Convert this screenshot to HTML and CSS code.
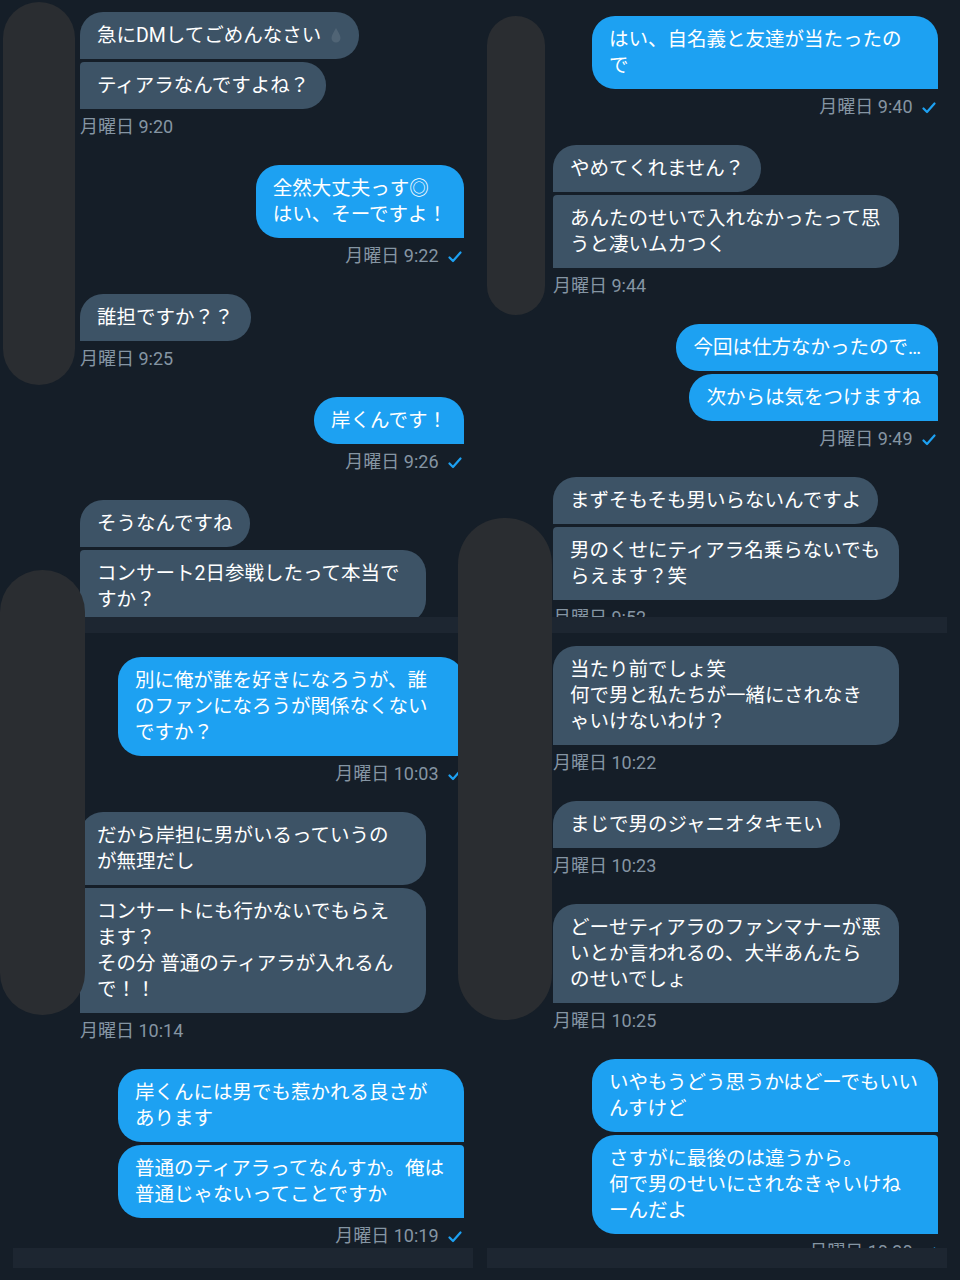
FILE: index.html
```html
<!DOCTYPE html>
<html lang="ja">
<head>
    <meta charset="UTF-8">
    <title>DM</title>
    <link rel="stylesheet" href="styles.css">
</head>
<body>

    <div class="collage">

        <!-- top left -->
        <section class="panel panel-top">
            <div class="chat chat-left" style="padding-top: 12px;">
                <div class="group in">
                    <div class="bubble">急にDMしてごめんなさい<svg class="drop" width="12" height="16" viewBox="0 0 12 16"><path d="M6 1 C4 5 1.5 8 1.5 11 A4.5 4.5 0 0 0 10.5 11 C10.5 8 8 5 6 1 Z" fill="rgba(255,255,255,0.1)"/></svg></div>
                    <div class="bubble cont">ティアラなんですよね？</div>
                    <div class="time">月曜日 9:20</div>
                </div>
                <div class="group out">
                    <div class="bubble">全然大丈夫っす◎<br>はい、そーですよ！</div>
                    <div class="time">月曜日 9:22 <svg class="check" width="14" height="12" viewBox="0 0 14 12"><path d="M1.5 6.5 L5 10 L12.5 1.5" fill="none" stroke="#1da1f2" stroke-width="2.2" stroke-linecap="round" stroke-linejoin="round"/></svg></div>
                </div>
                <div class="group in">
                    <div class="bubble">誰担ですか？？</div>
                    <div class="time">月曜日 9:25</div>
                </div>
                <div class="group out">
                    <div class="bubble">岸くんです！</div>
                    <div class="time">月曜日 9:26 <svg class="check" width="14" height="12" viewBox="0 0 14 12"><path d="M1.5 6.5 L5 10 L12.5 1.5" fill="none" stroke="#1da1f2" stroke-width="2.2" stroke-linecap="round" stroke-linejoin="round"/></svg></div>
                </div>
                <div class="group in">
                    <div class="bubble">そうなんですね</div>
                    <div class="bubble wide cont">コンサート2日参戦したって本当で<br>すか？</div>
                </div>
            </div>
            <div class="bar"></div>
        </section>

        <!-- top right -->
        <section class="panel panel-top">
            <div class="chat chat-right" style="padding-top: 16px;">
                <div class="group out">
                    <div class="bubble wide">はい、自名義と友達が当たったの<br>で</div>
                    <div class="time">月曜日 9:40 <svg class="check" width="14" height="12" viewBox="0 0 14 12"><path d="M1.5 6.5 L5 10 L12.5 1.5" fill="none" stroke="#1da1f2" stroke-width="2.2" stroke-linecap="round" stroke-linejoin="round"/></svg></div>
                </div>
                <div class="group in">
                    <div class="bubble">やめてくれません？</div>
                    <div class="bubble wide cont">あんたのせいで入れなかったって思<br>うと凄いムカつく</div>
                    <div class="time">月曜日 9:44</div>
                </div>
                <div class="group out">
                    <div class="bubble">今回は仕方なかったので…</div>
                    <div class="bubble cont">次からは気をつけますね</div>
                    <div class="time">月曜日 9:49 <svg class="check" width="14" height="12" viewBox="0 0 14 12"><path d="M1.5 6.5 L5 10 L12.5 1.5" fill="none" stroke="#1da1f2" stroke-width="2.2" stroke-linecap="round" stroke-linejoin="round"/></svg></div>
                </div>
                <div class="group in">
                    <div class="bubble">まずそもそも男いらないんですよ</div>
                    <div class="bubble wide cont">男のくせにティアラ名乗らないでも<br>らえます？笑</div>
                    <div class="time">月曜日 9:52</div>
                </div>
            </div>
            <div class="bar bar-right"></div>
        </section>

        <!-- bottom left -->
        <section class="panel panel-bottom">
            <div class="chat chat-left" style="padding-top: 24px;">
                <div class="group out">
                    <div class="bubble wide">別に俺が誰を好きになろうが、誰<br>のファンになろうが関係なくない<br>ですか？</div>
                    <div class="time">月曜日 10:03 <svg class="check" width="14" height="12" viewBox="0 0 14 12"><path d="M1.5 6.5 L5 10 L12.5 1.5" fill="none" stroke="#1da1f2" stroke-width="2.2" stroke-linecap="round" stroke-linejoin="round"/></svg></div>
                </div>
                <div class="group in">
                    <div class="bubble wide">だから岸担に男がいるっていうの<br>が無理だし</div>
                    <div class="bubble wide cont">コンサートにも行かないでもらえ<br>ます？<br>その分 普通のティアラが入れるん<br>で！！</div>
                    <div class="time">月曜日 10:14</div>
                </div>
                <div class="group out">
                    <div class="bubble wide">岸くんには男でも惹かれる良さが<br>あります</div>
                    <div class="bubble wide cont">普通のティアラってなんすか。俺は<br>普通じゃないってことですか</div>
                    <div class="time">月曜日 10:19 <svg class="check" width="14" height="12" viewBox="0 0 14 12"><path d="M1.5 6.5 L5 10 L12.5 1.5" fill="none" stroke="#1da1f2" stroke-width="2.2" stroke-linecap="round" stroke-linejoin="round"/></svg></div>
                </div>
            </div>
            <div class="bar bar-bl"></div>
        </section>

        <!-- bottom right -->
        <section class="panel panel-bottom">
            <div class="chat chat-right" style="padding-top: 13px;">
                <div class="group in">
                    <div class="bubble wide">当たり前でしょ笑<br>何で男と私たちが一緒にされなき<br>ゃいけないわけ？</div>
                    <div class="time">月曜日 10:22</div>
                </div>
                <div class="group in">
                    <div class="bubble">まじで男のジャニオタキモい</div>
                    <div class="time">月曜日 10:23</div>
                </div>
                <div class="group in">
                    <div class="bubble wide">どーせティアラのファンマナーが悪<br>いとか言われるの、大半あんたら<br>のせいでしょ</div>
                    <div class="time">月曜日 10:25</div>
                </div>
                <div class="group out">
                    <div class="bubble wide">いやもうどう思うかはどーでもいい<br>んすけど</div>
                    <div class="bubble wide cont">さすがに最後のは違うから。<br>何で男のせいにされなきゃいけね<br>ーんだよ</div>
                    <div class="time">月曜日 10:30 <svg class="check" width="14" height="12" viewBox="0 0 14 12"><path d="M1.5 6.5 L5 10 L12.5 1.5" fill="none" stroke="#1da1f2" stroke-width="2.2" stroke-linecap="round" stroke-linejoin="round"/></svg></div>
                </div>
            </div>
            <div class="bar bar-br"></div>
        </section>

        <!-- avatar blur marks laid over the screenshots -->
        <div class="blot blot-1"></div>
        <div class="blot blot-2"></div>
        <div class="blot blot-3"></div>
        <div class="blot blot-4"></div>
    </div>

</body>
</html>
```

FILE: styles.css
```css
* {
    box-sizing: border-box;
}

body {
    margin: 0;
    background-color: #151e28;
    font-family: Roboto, "Noto Sans CJK JP", sans-serif;
}

/* Collage of four screenshots */
.collage {
    position: relative;
    width: 960px;
    height: 1280px;
    display: grid;
    grid-template-columns: 480px 480px;
    grid-template-rows: 633px 647px;
    background-color: #151e28;
    overflow: hidden;
}

.panel {
    display: flex;
    flex-direction: column;
    min-height: 0;
}

.panel-bottom {
    padding-bottom: 12px;
}

.chat {
    flex: 1;
    min-height: 0;
    overflow: hidden;
    display: flex;
    flex-direction: column;
    gap: 28px;
}

.chat-left {
    padding-left: 80px;
    padding-right: 16px;
}

.chat-right {
    padding-left: 73px;
    padding-right: 22px;
}

/* top of the message bar at the bottom of each screenshot */
.bar {
    flex-shrink: 0;
    height: 16px;
    background-color: #1d2631;
}

.bar-right {
    margin-right: 13px;
}

.bar-bl {
    height: 20px;
    margin: 0 7px 0 13px;
}

.bar-br {
    height: 20px;
    margin: 0 13px 0 7px;
}

/* Message groups */
.group {
    display: flex;
    flex-direction: column;
    gap: 3px;
}

.group.in {
    align-items: flex-start;
}

.group.out {
    align-items: flex-end;
}

.bubble {
    padding: 11px 17px 10px;
    font-size: 19.5px;
    line-height: 26px;
    color: #ffffff;
    white-space: nowrap;
}

.bubble.wide {
    width: 346px;
}

.in .bubble {
    background-color: #3d5366;
    border-radius: 23px 23px 23px 0;
}

.in .bubble.cont {
    border-top-left-radius: 4px;
}

.out .bubble {
    background-color: #1da1f2;
    border-radius: 23px 23px 0 23px;
}

.out .bubble.cont {
    border-top-right-radius: 4px;
}

.drop {
    margin-left: 9px;
    vertical-align: -1px;
}

.time {
    margin-top: 5px;
    font-size: 18px;
    line-height: 20px;
    color: #8595a3;
    white-space: nowrap;
}

.out .time {
    margin-right: 2px;
}

.check {
    margin-left: 5px;
    vertical-align: -1px;
}

/* Grey marks hiding the avatars */
.blot {
    position: absolute;
    background-color: #2a2d31;
}

.blot-1 {
    left: 3px;
    top: 2px;
    width: 72px;
    height: 383px;
    border-radius: 36px;
}

.blot-2 {
    left: 487px;
    top: 16px;
    width: 58px;
    height: 299px;
    border-radius: 29px;
}

.blot-3 {
    left: 0;
    top: 570px;
    width: 85px;
    height: 445px;
    border-radius: 42px;
}

.blot-4 {
    left: 458px;
    top: 518px;
    width: 94px;
    height: 502px;
    border-radius: 46px;
}
```
